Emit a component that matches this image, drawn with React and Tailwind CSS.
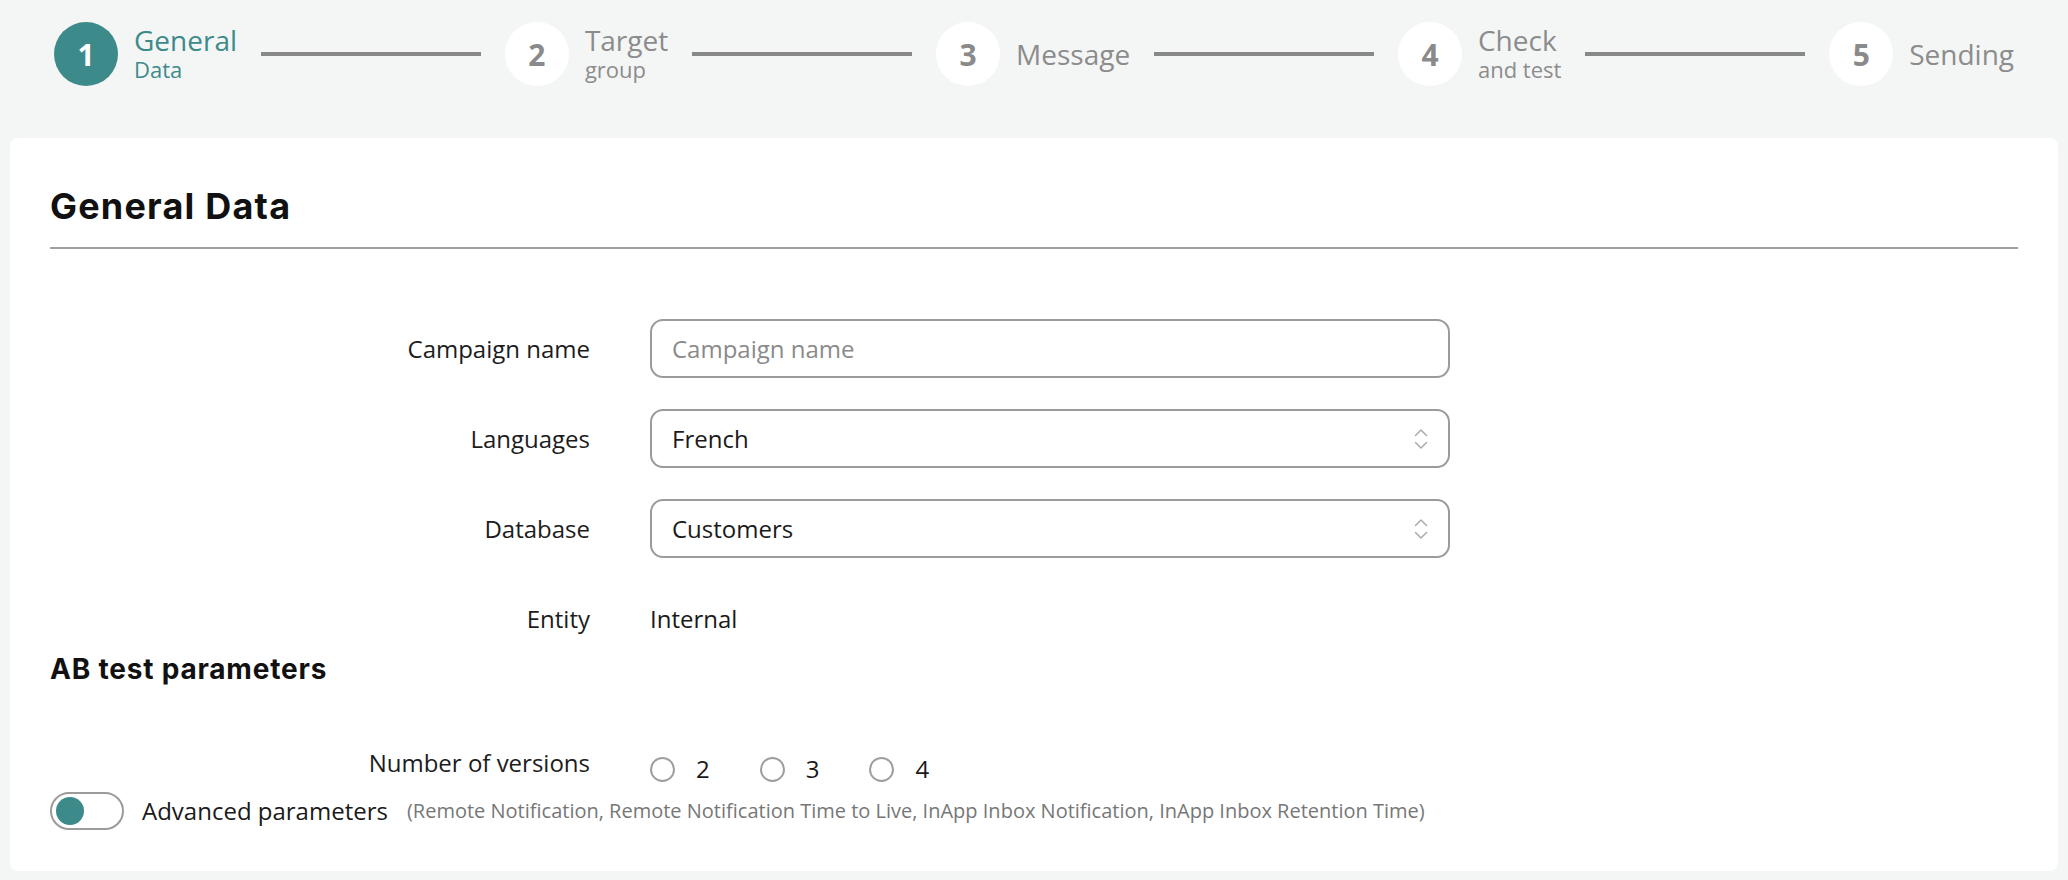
import React from 'react';

const STEPS = [
  { n: 1, title: 'General', sub: 'Data', active: true },
  { n: 2, title: 'Target', sub: 'group' },
  { n: 3, title: 'Message' },
  { n: 4, title: 'Check', sub: 'and test' },
  { n: 5, title: 'Sending' },
];

// --- stepper ---
const Step = ({ step }) => (
  <div className="flex items-center gap-4 shrink-0">
    <div
      className={`w-16 h-16 rounded-full flex items-center justify-center text-[30px] font-bold ${
        step.active ? 'bg-[#3d8a8a] text-white' : 'bg-white text-[#8a8a8a]'
      }`}
    >
      {step.n}
    </div>
    <div className={step.active ? 'text-[#3d8a8a]' : 'text-[#8c8c8c]'}>
      <div className="text-[28px] leading-[30px]">{step.title}</div>
      {step.sub && <div className="text-[22px] leading-[28px]">{step.sub}</div>}
    </div>
  </div>
);

const Stepper = () => (
  <div className="h-[108px] px-[54px] flex items-center gap-6">
    {STEPS.map((s, i) => (
      <React.Fragment key={s.n}>
        {i > 0 && <div className="flex-1 h-1 bg-[#888888]" />}
        <Step step={s} />
      </React.Fragment>
    ))}
  </div>
);

// --- form pieces ---
const Chevrons = () => (
  <svg width="14" height="22" viewBox="0 0 14 22" fill="none" stroke="#ababab" strokeWidth="1.5" strokeLinecap="round" strokeLinejoin="round">
    <path d="M1.5 7.5 L7 2 L12.5 7.5" />
    <path d="M1.5 14.5 L7 20 L12.5 14.5" />
  </svg>
);

const Row = ({ label, children, className = 'items-center' }) => (
  <div className={`flex ${className}`}>
    <div className="w-[540px] text-right text-[24px] leading-8 text-[#1c1c1c] shrink-0">{label}</div>
    <div className="ml-[60px]">{children}</div>
  </div>
);

const SelectBox = ({ value }) => (
  <div className="w-[800px] h-[59px] border-2 border-[#9b9b9b] rounded-[13px] pl-5 pr-[20px] flex items-center justify-between">
    <span className="text-[24px] leading-8 text-[#1a1a1a]">{value}</span>
    <Chevrons />
  </div>
);

const Radio = ({ label }) => (
  <label className="flex items-center gap-[21px]">
    <span className="w-[25px] h-[25px] rounded-full border-2 border-[#9e9e9e] bg-white" />
    <span className="text-[24px] leading-8 text-[#1a1a1a]">{label}</span>
  </label>
);

const App = () => {
  return (
    <div className="min-h-screen w-full bg-[#f4f6f5] font-['Open_Sans',sans-serif] pb-[9px]">
      <Stepper />

      <div className="mt-[30px] mx-[10px] bg-white rounded-lg px-10 pt-[46px] pb-[41px]">
        {/* header */}
        <h1 className="font-['Inter',sans-serif] font-bold text-[36px] leading-[44px] tracking-[1.2px] text-[#111111] pb-[19px] border-b-2 border-[#a0a0a0]">
          General Data
        </h1>

        {/* main fields */}
        <div className="mt-[70px] flex flex-col gap-[31px]">
          <Row label="Campaign name">
            <input
              type="text"
              placeholder="Campaign name"
              className="w-[800px] h-[59px] border-2 border-[#9b9b9b] rounded-[13px] px-5 text-[24px] text-[#1a1a1a] placeholder:text-[#8a8a8a] outline-none"
            />
          </Row>
          <Row label="Languages">
            <SelectBox value="French" />
          </Row>
          <Row label="Database">
            <SelectBox value="Customers" />
          </Row>
          <Row label="Entity" className="items-center h-[59px]">
            <span className="text-[24px] leading-8 text-[#1a1a1a]">Internal</span>
          </Row>
        </div>

        {/* AB test */}
        <h2 className="mt-[3px] font-['Inter',sans-serif] font-bold text-[28px] leading-9 tracking-[0.8px] text-[#111111]">
          AB test parameters
        </h2>

        <div className="mt-[60px]">
          <Row label="Number of versions" className="items-start">
            <div className="pt-[6px] flex items-center gap-[50px]">
              <Radio label="2" />
              <Radio label="3" />
              <Radio label="4" />
            </div>
          </Row>
        </div>

        <div className="mt-[7px] flex items-center">
          <div className="w-[74px] h-[38px] rounded-full border-2 border-[#9b9b9b] flex items-center pl-1">
            <div className="w-7 h-7 rounded-full bg-[#3d8a8a]" />
          </div>
          <span className="ml-[18px] text-[24px] leading-8 text-[#1a1a1a]">Advanced parameters</span>
          <span className="ml-[19px] text-[20px] leading-8 text-[#777777]">
            (Remote Notification, Remote Notification Time to Live, InApp Inbox Notification, InApp Inbox Retention Time)
          </span>
        </div>
      </div>
    </div>
  );
};

export default App;
